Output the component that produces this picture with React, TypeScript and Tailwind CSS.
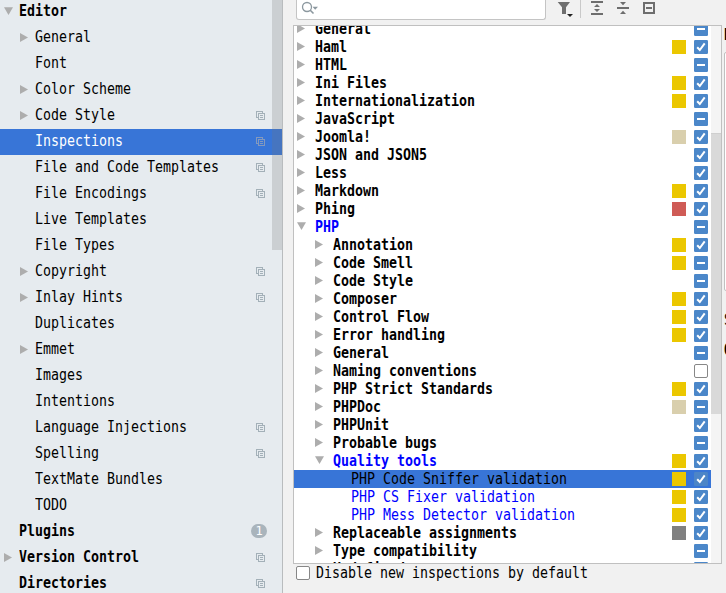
import React from "react";

type Side = { t: string; lvl: 0 | 1; arrow?: "r" | "d"; bold?: boolean; copy?: boolean; sel?: boolean; badge?: string };

const side: Side[] = [
  { t: "Editor", lvl: 0, arrow: "d", bold: true },
  { t: "General", lvl: 1, arrow: "r" },
  { t: "Font", lvl: 1 },
  { t: "Color Scheme", lvl: 1, arrow: "r" },
  { t: "Code Style", lvl: 1, arrow: "r", copy: true },
  { t: "Inspections", lvl: 1, copy: true, sel: true },
  { t: "File and Code Templates", lvl: 1, copy: true },
  { t: "File Encodings", lvl: 1, copy: true },
  { t: "Live Templates", lvl: 1 },
  { t: "File Types", lvl: 1 },
  { t: "Copyright", lvl: 1, arrow: "r", copy: true },
  { t: "Inlay Hints", lvl: 1, arrow: "r", copy: true },
  { t: "Duplicates", lvl: 1 },
  { t: "Emmet", lvl: 1, arrow: "r" },
  { t: "Images", lvl: 1 },
  { t: "Intentions", lvl: 1 },
  { t: "Language Injections", lvl: 1, copy: true },
  { t: "Spelling", lvl: 1, copy: true },
  { t: "TextMate Bundles", lvl: 1 },
  { t: "TODO", lvl: 1 },
  { t: "Plugins", lvl: 0, bold: true, badge: "1" },
  { t: "Version Control", lvl: 0, arrow: "r", bold: true, copy: true },
  { t: "Directories", lvl: 0, bold: true, copy: true },
];

type State = "on" | "mix" | "off";
type Insp = { t: string; lvl: 0 | 1 | 2; s: State; sev?: "y" | "w" | "e" | "g"; open?: boolean; blue?: boolean; sel?: boolean };

const inspections: Insp[] = [
  { t: "General", lvl: 0, s: "mix" },
  { t: "Haml", lvl: 0, s: "on", sev: "y" },
  { t: "HTML", lvl: 0, s: "mix" },
  { t: "Ini Files", lvl: 0, s: "on", sev: "y" },
  { t: "Internationalization", lvl: 0, s: "on", sev: "y" },
  { t: "JavaScript", lvl: 0, s: "mix" },
  { t: "Joomla!", lvl: 0, s: "on", sev: "w" },
  { t: "JSON and JSON5", lvl: 0, s: "on" },
  { t: "Less", lvl: 0, s: "on" },
  { t: "Markdown", lvl: 0, s: "on", sev: "y" },
  { t: "Phing", lvl: 0, s: "on", sev: "e" },
  { t: "PHP", lvl: 0, s: "mix", open: true, blue: true },
  { t: "Annotation", lvl: 1, s: "on", sev: "y" },
  { t: "Code Smell", lvl: 1, s: "mix", sev: "y" },
  { t: "Code Style", lvl: 1, s: "mix" },
  { t: "Composer", lvl: 1, s: "on", sev: "y" },
  { t: "Control Flow", lvl: 1, s: "on", sev: "y" },
  { t: "Error handling", lvl: 1, s: "on", sev: "y" },
  { t: "General", lvl: 1, s: "mix" },
  { t: "Naming conventions", lvl: 1, s: "off" },
  { t: "PHP Strict Standards", lvl: 1, s: "on", sev: "y" },
  { t: "PHPDoc", lvl: 1, s: "mix", sev: "w" },
  { t: "PHPUnit", lvl: 1, s: "on" },
  { t: "Probable bugs", lvl: 1, s: "mix" },
  { t: "Quality tools", lvl: 1, s: "on", sev: "y", open: true, blue: true },
  { t: "PHP Code Sniffer validation", lvl: 2, s: "on", sev: "y", sel: true },
  { t: "PHP CS Fixer validation", lvl: 2, s: "on", sev: "y", blue: true },
  { t: "PHP Mess Detector validation", lvl: 2, s: "on", sev: "y", blue: true },
  { t: "Replaceable assignments", lvl: 1, s: "on", sev: "g" },
  { t: "Type compatibility", lvl: 1, s: "mix" },
  { t: "Undefined", lvl: 1, s: "mix" },
];

const sevColor = { y: "bg-[#ebc700]", w: "bg-[#d9cfad]", e: "bg-[#cf5b56]", g: "bg-[#808080]" };
const inspPad = ["pl-[3px]", "pl-[21px]", "pl-[39px]"];

function Label({ children, bold, className = "" }: { children: React.ReactNode; bold?: boolean; className?: string }) {
  return (
    <span
      className={`inline-block origin-left scale-x-[0.8859] whitespace-pre font-['DejaVu_Sans_Mono',monospace] text-[15px] leading-[18px] ${bold ? "font-bold" : ""} ${className}`}
    >
      {children}
    </span>
  );
}

function Arrow({ dir }: { dir?: "r" | "d" }) {
  return (
    <svg width="9" height="10" viewBox="0 0 9 10" className="shrink-0" fill="#adadad">
      {dir === "r" && <path d="M0 0L8 4.5L0 9z" />}
      {dir === "d" && <path d="M0 0.3H9L4.5 8z" />}
    </svg>
  );
}

function CopyIcon({ sel }: { sel?: boolean }) {
  return (
    <svg
      width="9"
      height="10"
      viewBox="0 0 9 10"
      fill="none"
      stroke={sel ? "#8499bd" : "#a3b0b8"}
      className="shrink-0"
      shapeRendering="crispEdges"
    >
      <path d="M2 6.5H0.5V0.5H6.5V2" />
      <path d="M2.5 2.5H8.5V8.5H2.5zM4 4.5H7M4 6.5H7" />
    </svg>
  );
}

function Check({ s, sel }: { s: State; sel?: boolean }) {
  if (s === "off") return <span className="size-[14px] shrink-0 rounded-[2px] border border-[#878787] bg-white" />;
  return (
    <svg width="14" height="14" viewBox="0 0 14 14" className="shrink-0">
      <rect width="14" height="14" rx="1.2" fill={sel ? "#4d85c7" : "#4b87c9"} />
      {s === "on" ? (
        <path d="M3.2 7.2L5.8 10L10.7 3.3" fill="none" stroke="#fff" strokeWidth="2" />
      ) : (
        <rect x="3" y="6" width="8" height="2" fill="#fff" />
      )}
    </svg>
  );
}

export default function App() {
  return (
    <div className="flex h-[593px] w-[726px] overflow-hidden bg-[#f1f1f1] text-black">
      <aside className="relative w-[283px] shrink-0 overflow-hidden border-r border-[#b9bcbe] bg-[#e6ebef]">
        <div className="-mt-px">
          {side.map((r) => (
            <div
              key={r.t}
              className={`flex h-[26px] items-center pr-[17px] ${r.lvl ? "pl-5" : "pl-1"} ${r.sel ? "bg-[#3875d7] text-white" : ""}`}
            >
              <Arrow dir={r.arrow} />
              <Label bold={r.bold} className="mb-[2px] ml-[6px]">{r.t}</Label>
              <span className="flex-1" />
              {r.copy && <CopyIcon sel={r.sel} />}
              {r.badge && (
                <span className="-mr-[2px] mb-[2px] flex h-[14px] w-4 items-center justify-center rounded-full bg-[#a9b4bc] font-['DejaVu_Sans_Mono',monospace] text-[12px] leading-none text-white">
                  {r.badge}
                </span>
              )}
            </div>
          ))}
        </div>
        <div className="absolute top-0 right-0 h-[250px] w-[10px] bg-[#737373]/23" />
      </aside>

      <main className="flex w-[439px] shrink-0 flex-col pl-[10px]">
        <div className="flex h-[25px] shrink-0 items-start">
          <div className="ml-[3px] h-5 w-[250px] rounded-b-[3px] border border-t-0 border-[#c4c4c4] bg-white">
            <svg width="22" height="16" viewBox="0 0 22 16" className="ml-[4px]" fill="none" stroke="#8c989f" strokeWidth="1.3">
              <circle cx="6" cy="7" r="4.5" />
              <path d="M9 10L12.5 13.5" strokeWidth="1.6" />
              <path d="M11.5 6.7H17L14.2 9.7z" fill="#8c989f" stroke="none" />
            </svg>
          </div>
          <svg width="110" height="19" viewBox="0 0 110 19" className="ml-[10px]" fill="#6e6e6e">
            <path d="M1.7 2H14L10 7.2V14H6V7.2z" />
            <path d="M11 14H17L14 17z" fill="#222" />
            <rect x="24" y="0" width="1" height="18" fill="#c9c9c9" />
            <path d="M35 1H47V3H35zM35 13H47V15H35zM41 4L44 7H38zM38 9H44L41 12z" />
            <path d="M61 7H73V9H61zM64 2H70L67 5.3zM67 10.7L70 14H64z" />
            <path d="M87 2H99V14H87zM89 4V12H97V4zM90 7H96V9H90z" fillRule="evenodd" />
          </svg>
        </div>

        <div className="flex h-[539px] w-[429px] shrink-0 border border-[#c0c0c0] bg-white">
          <div className="w-[417px] shrink-0 overflow-hidden">
            <div className="-mt-[6px]">
              {inspections.map((r, i) => (
                <div key={i} className={`flex h-[18px] items-center pr-[3px] ${inspPad[r.lvl]} ${r.sel ? "bg-[#3875d7]" : ""}`}>
                  {r.lvl < 2 && (
                    <>
                      <Arrow dir={r.open ? "d" : "r"} />
                      <span className="w-[9px]" />
                    </>
                  )}
                  {r.lvl === 2 && <span className="w-[18px]" />}
                  <Label bold={r.lvl < 2} className={r.blue ? "text-[#0000ff]" : ""}>{r.t}</Label>
                  <span className="flex-1" />
                  {r.sev && <span className={`mr-2 size-[14px] shrink-0 ${sevColor[r.sev]}`} />}
                  <Check s={r.s} sel={r.sel} />
                </div>
              ))}
            </div>
          </div>
          <div className="flex-1 bg-[#f4f4f4] pt-[107px]">
            <div className="h-[281px] border-t border-[#cfcfcf] bg-[#d9d9d9]" />
          </div>
        </div>

        <div className="flex h-[18px] items-center pl-[3px]">
          <span className="size-[14px] rounded-[2px] border border-[#878787] bg-white" />
          <Label className="ml-[6px]">Disable new inspections by default</Label>
        </div>
      </main>

      <section className="w-[4px] shrink-0 overflow-hidden pl-[2px]">
        <div className="flex h-[52px] items-start pt-[26px]">
          <Label bold>D</Label>
        </div>
        <div className="h-[239px] w-3 rounded-l-[2px] border border-[#c0c0c0] bg-white" />
        <div className="mt-[20px] flex h-[20px]"><Label>S</Label></div>
        <div className="mt-[10px] flex h-[20px]"><Label bold>O</Label></div>
      </section>
    </div>
  );
}
